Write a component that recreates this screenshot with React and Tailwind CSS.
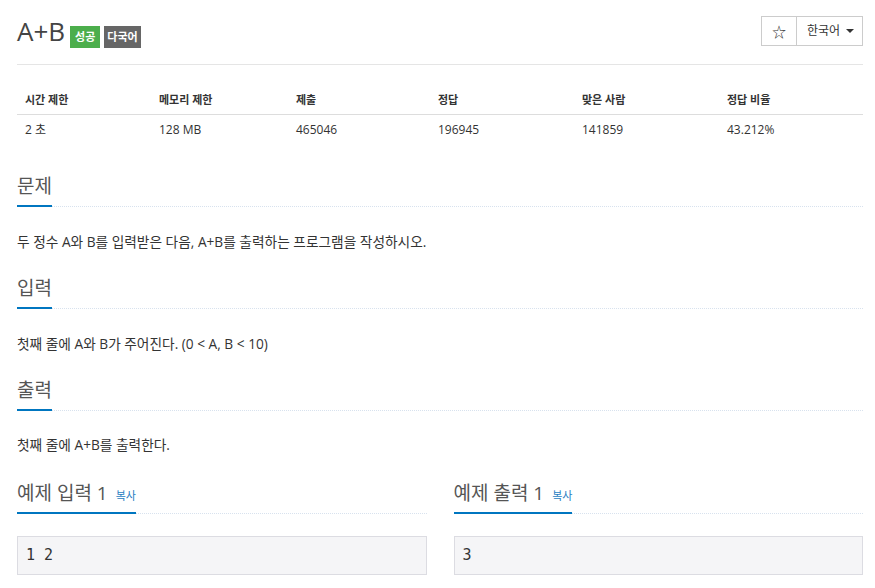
import React from "react";

const font = {
  fontFamily: '"Open Sans", "Noto Sans CJK KR", sans-serif',
};

const mono = { fontFamily: '"DejaVu Sans Mono", monospace' };

const SectionHead = ({ title, copy }) => (
  <div className="border-b border-dotted border-[#d8e2ee] flex">
    <h2 className="text-[19px] leading-[24px] text-[#555] pb-[7px] border-b-2 border-[#0076c0] -mb-px flex items-baseline gap-[8px]">
      {title}
      {copy && <span className="text-[11px] leading-none text-[#2a7ec2]">복사</span>}
    </h2>
  </div>
);

const cols = [
  { head: "시간 제한", val: "2 초", w: "w-[134px]" },
  { head: "메모리 제한", val: "128 MB", w: "w-[137px]" },
  { head: "제출", val: "465046", w: "w-[142px]" },
  { head: "정답", val: "196945", w: "w-[144px]" },
  { head: "맞은 사람", val: "141859", w: "w-[145px]" },
  { head: "정답 비율", val: "43.212%", w: "" },
];

export default function App() {
  return (
    <div className="bg-white min-h-screen pl-[17px] pr-[12px] pt-[16px] text-[#333]" style={font}>
      <div className="flex justify-between items-start border-b border-[#e5e5e5] pb-[16px]">
        <div className="flex items-baseline gap-[4px] h-[32px]">
          <h1 className="text-[26px] leading-[30px] text-[#444] mr-[1px]">A+B</h1>
          <span className="bg-[#4cae4c] text-white text-[11px] leading-[22px] px-[5px] font-semibold">성공</span>
          <span className="bg-[#666] text-white text-[11px] leading-[22px] px-[3px] font-semibold">다국어</span>
        </div>
        <div className="flex border border-[#ccc] h-[30px] text-[12px]">
          <div className="w-[35px] flex items-center justify-center border-r border-[#ccc] text-[14px]">☆</div>
          <div className="w-[65px] flex items-center justify-between pl-[10px] pr-[8px]">
            <span>한국어</span>
            <svg width="8" height="4" viewBox="0 0 8 4"><path d="M0 0h8L4 4z" fill="#333" /></svg>
          </div>
        </div>
      </div>

      <table className="w-full mt-[20px] text-[12px] border-collapse">
        <thead>
          <tr className="border-b border-[#ddd]">
            {cols.map((c) => (
              <th key={c.head} className={`${c.w} text-left font-bold px-[8px] py-[7px] text-[11px] leading-[15px]`}>
                {c.head}
              </th>
            ))}
          </tr>
        </thead>
        <tbody>
          <tr>
            {cols.map((c) => (
              <td key={c.head} className="px-[8px] py-[7px] leading-[16px]">{c.val}</td>
            ))}
          </tr>
        </tbody>
      </table>

      <div className="mt-[29px]">
        <SectionHead title="문제" />
        <p className="text-[13.7px] leading-[20px] mt-[25px]">두 정수 A와 B를 입력받은 다음, A+B를 출력하는 프로그램을 작성하시오.</p>
      </div>
      <div className="mt-[24px]">
        <SectionHead title="입력" />
        <p className="text-[13.7px] leading-[20px] mt-[25px]">첫째 줄에 A와 B가 주어진다. (0 &lt; A, B &lt; 10)</p>
      </div>
      <div className="mt-[24px]">
        <SectionHead title="출력" />
        <p className="text-[13.7px] leading-[20px] mt-[24px]">첫째 줄에 A+B를 출력한다.</p>
      </div>

      <div className="grid grid-cols-2 gap-[27px] mt-[26px]">
        <div>
          <SectionHead title="예제 입력 1" copy />
          <pre className="mt-[22px] bg-[#f5f5f7] border border-[#dcdce2] px-[8px] py-[8px] text-[15px] leading-[21px]" style={mono}>1 2</pre>
        </div>
        <div>
          <SectionHead title="예제 출력 1" copy />
          <pre className="mt-[22px] bg-[#f5f5f7] border border-[#dcdce2] px-[8px] py-[8px] text-[15px] leading-[21px]" style={mono}>3</pre>
        </div>
      </div>
    </div>
  );
}
